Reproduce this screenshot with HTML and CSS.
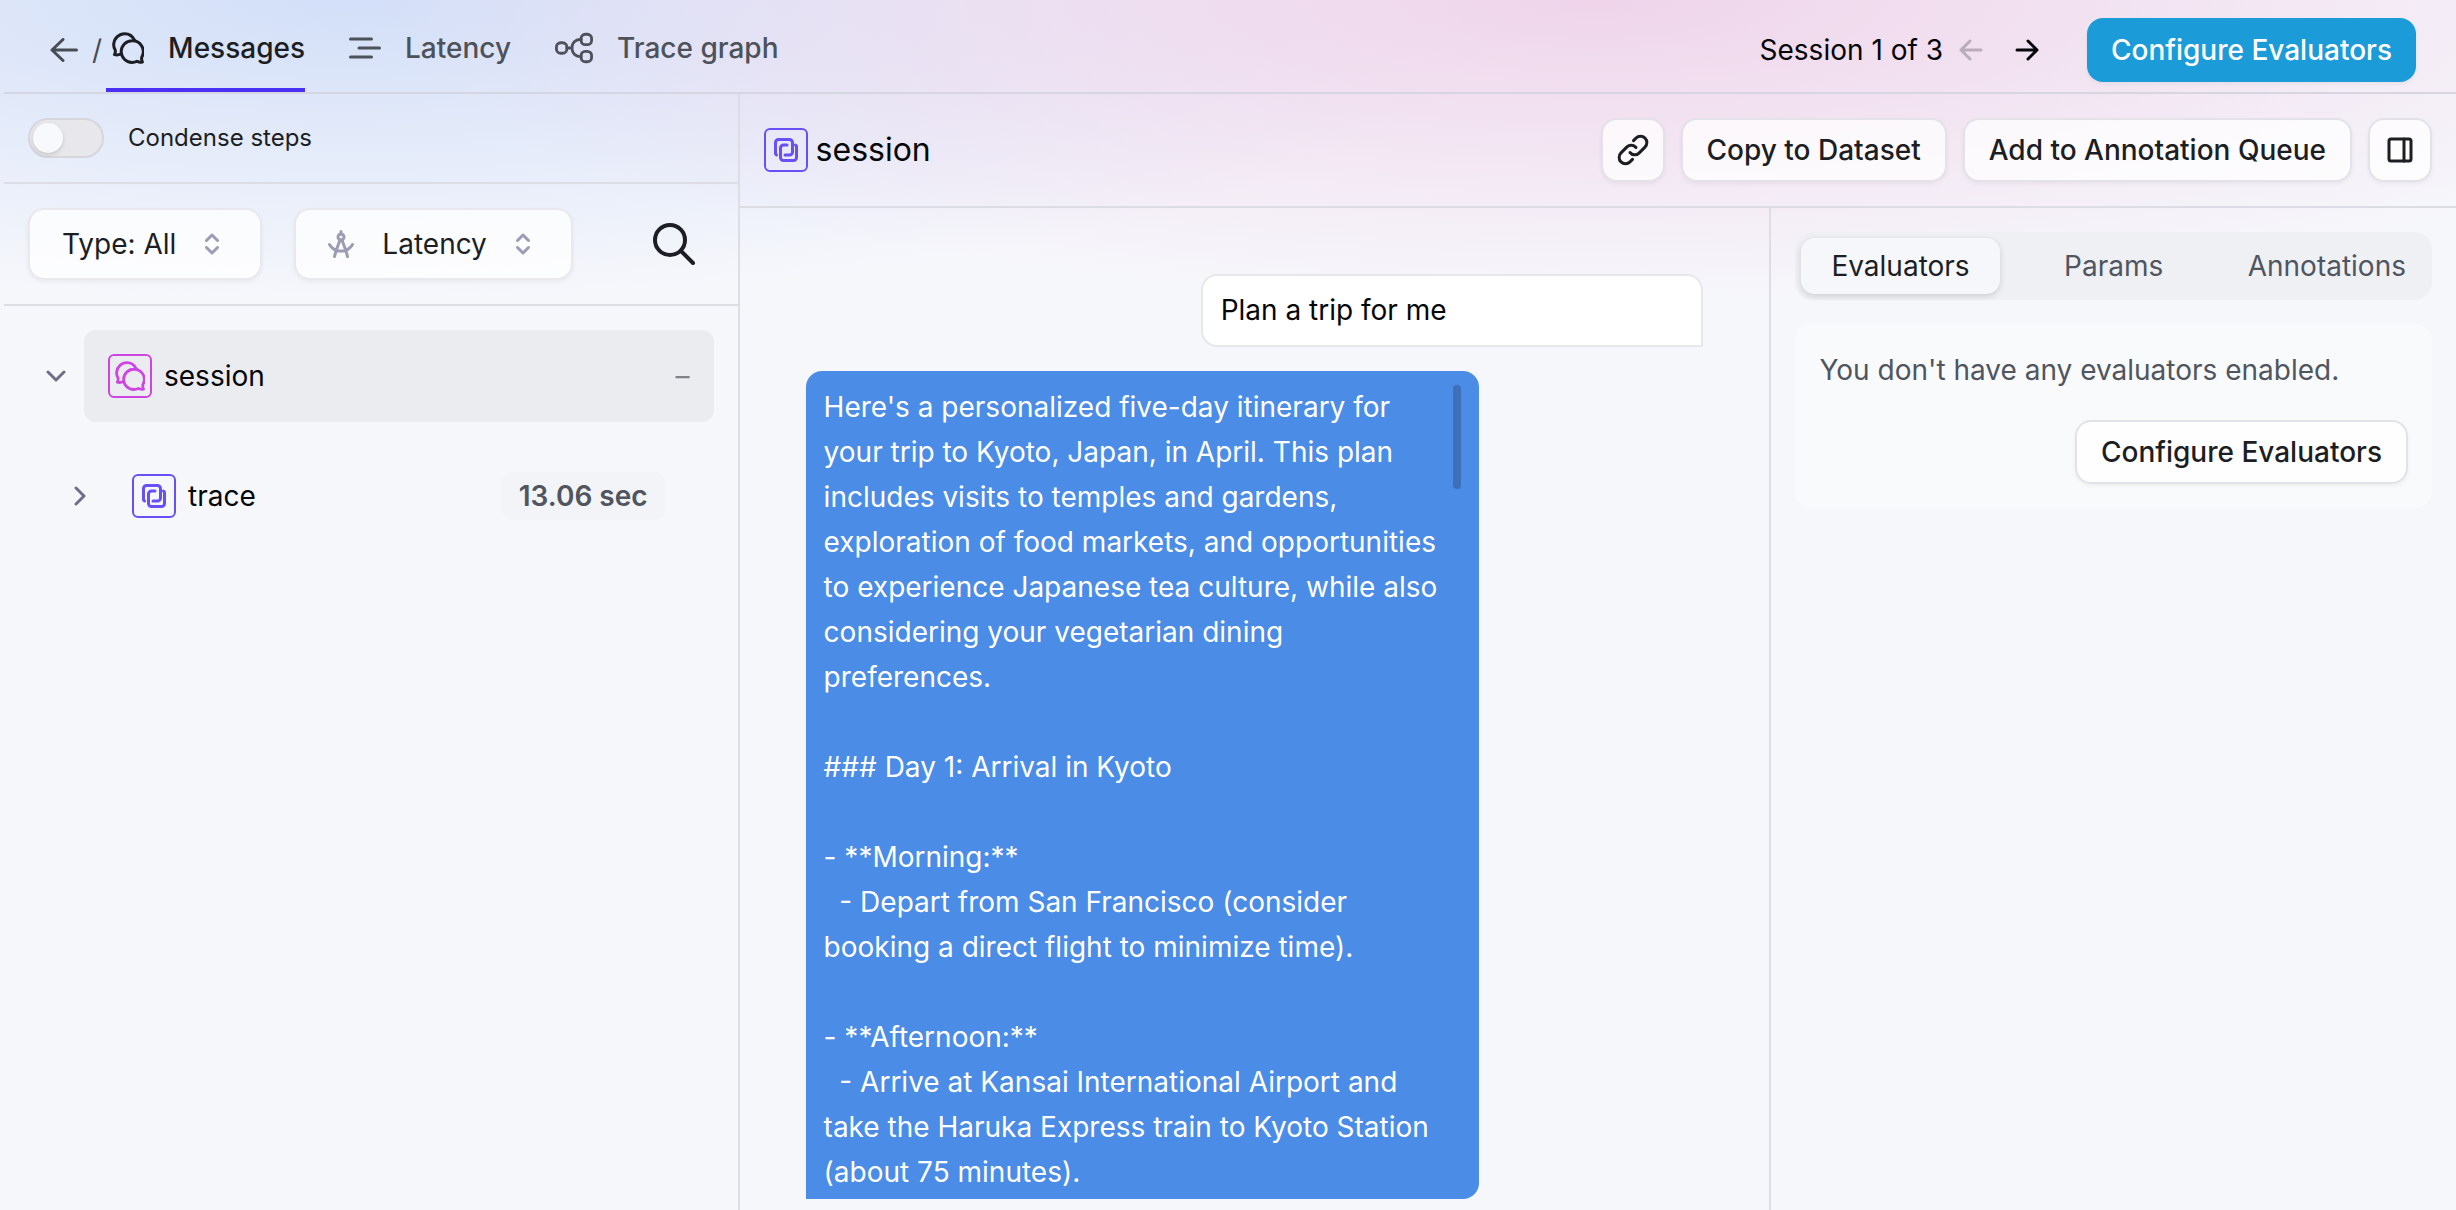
FILE: index.html
```html
<!DOCTYPE html>
<html lang="en">
<head>
    <meta charset="UTF-8">
    <title>Session</title>
    <link rel="stylesheet" href="styles.css">
</head>

<body>
    <!-- shared icons -->
    <svg class="sprite" aria-hidden="true">
        <symbol id="icon-messages" viewBox="0 0 32 32">
            <path d="M8.6 22.2c-1.700 .7-4 .9-6.200 .4 .9-1.400 1.200-3 .8-4.600A10.300 10.300 0 0 1 1.700 12C2.300 6.200 7 1.700 12.700 1.700c4.300 0 8 2.500 9.800 6.500"/>
            <path d="M20 8.800c-6 0-10.800 4.900-10.800 10.800S14 30.400 20 30.400c1.800 0 3.500-.4 5-1.200 1.600 .9 3.400 1.200 5.400 .8-.8-1.600-1-3.300-.6-5a10.800 10.800 0 0 0-9.800-16.200z"/>
        </symbol>
        <symbol id="icon-trace" viewBox="0 0 24 24">
            <path d="M2.500 17A2 2 0 0 1 1.500 15V4.500a3 3 0 0 1 3-3h11a3 3 0 0 1 3 3V14a3 3 0 0 1-3 3H11"/>
            <path d="M21.500 7a2 2 0 0 1 1 2v10.500a3 3 0 0 1-3 3h-10a3 3 0 0 1-3-3V10a3 3 0 0 1 3-3H13"/>
        </symbol>
        <symbol id="icon-updown" viewBox="0 0 16 22">
            <path d="M2.500 7.500L8 2l5.500 5.500M2.500 14.500L8 20l5.500-5.500"/>
        </symbol>
    </svg>

    <div class="app">
        <header class="topbar">
            <a href="#" class="back" aria-label="Back">
                <svg width="28" height="24" viewBox="0 0 28 24"><path d="M13 1.500L2 12l11 10.500M2 12h24.500"/></svg>
            </a>
            <span class="slash">/</span>
            <nav class="tabs">
                <a href="#" class="tab active">
                    <svg width="32" height="32"><use href="#icon-messages"/></svg>
                    Messages
                </a>
                <a href="#" class="tab">
                    <svg width="32" height="32" viewBox="0 0 32 32"><path d="M1.500 7h21M10 16h20.500M1.500 25h21"/></svg>
                    Latency
                </a>
                <a href="#" class="tab">
                    <svg width="38" height="32" viewBox="0 0 40 32">
                        <rect x="1.500" y="10.500" width="11" height="11" rx="4.500"/>
                        <rect x="27.500" y="1.500" width="11" height="11" rx="4.500"/>
                        <rect x="27.500" y="19.500" width="11" height="11" rx="4.500"/>
                        <path d="M12.500 16H18M27.500 7H26a8 8 0 0 0-8 8v2a8 8 0 0 0 8 8h1.500"/>
                    </svg>
                    Trace graph
                </a>
            </nav>
            <div class="pager">
                <span>Session 1 of 3</span>
                <button type="button" class="step" disabled aria-label="Previous session">
                    <svg width="24" height="24" viewBox="0 0 24 24"><path d="M11 3l-9 9 9 9M2 12h20"/></svg>
                </button>
                <button type="button" class="step" aria-label="Next session">
                    <svg width="24" height="24" viewBox="0 0 24 24"><path d="M13 3l9 9-9 9M22 12H2"/></svg>
                </button>
            </div>
            <button type="button" class="btn primary">Configure Evaluators</button>
        </header>

        <div class="body">
            <aside class="sidebar">
                <div class="condense">
                    <input type="checkbox" id="condense" class="switch">
                    <label for="condense">Condense steps</label>
                </div>
                <div class="filters">
                    <button type="button" class="filter">
                        Type: All
                        <svg width="16" height="22"><use href="#icon-updown"/></svg>
                    </button>
                    <button type="button" class="filter">
                        <svg width="26" height="28" viewBox="0 0 26 28">
                            <path d="M13 1.500V4M6.500 26.500L8 21l4-11M19.500 26.500L18 21l-4-11M1.500 14.500c2.500 4.500 6.500 6.500 11.500 6.500s9-2 11.500-6.500"/>
                            <circle cx="13" cy="7" r="3"/>
                        </svg>
                        Latency
                        <svg width="16" height="22"><use href="#icon-updown"/></svg>
                    </button>
                    <button type="button" class="search" aria-label="Search">
                        <svg width="44" height="44" viewBox="0 0 44 44"><circle cx="18" cy="18" r="15"/><path d="M29 29l12 12"/></svg>
                    </button>
                </div>
                <ul class="tree">
                    <li class="node">
                        <button type="button" class="toggle" aria-label="Collapse session">
                            <svg width="20" height="20" viewBox="0 0 20 20"><path d="M2 6l8 8 8-8"/></svg>
                        </button>
                        <div class="node-row selected">
                            <span class="badge pink"><svg width="30" height="30"><use href="#icon-messages"/></svg></span>
                            <span>session</span>
                            <span class="none">–</span>
                        </div>
                    </li>
                    <li class="node child">
                        <button type="button" class="toggle" aria-label="Expand trace">
                            <svg width="20" height="20" viewBox="0 0 20 20"><path d="M6 2l8 8-8 8"/></svg>
                        </button>
                        <div class="node-row">
                            <span class="badge"><svg width="24" height="24"><use href="#icon-trace"/></svg></span>
                            <span>trace</span>
                            <span class="duration">13.06 sec</span>
                        </div>
                    </li>
                </ul>
            </aside>

            <main class="main">
                <div class="main-head">
                    <span class="badge"><svg width="24" height="24"><use href="#icon-trace"/></svg></span>
                    <h1>session</h1>
                    <div class="actions">
                        <button type="button" class="btn icon" aria-label="Copy link">
                            <svg width="32" height="32" viewBox="0 0 32 32">
                                <path d="M13 18.500a6 6 0 0 0 9 .6l6-6a6.300 6.300 0 0 0-9-9l-2.500 2.500"/>
                                <path d="M19 13.500a6 6 0 0 0-9-.6l-6 6a6.300 6.300 0 0 0 9 9l2.500-2.500"/>
                            </svg>
                        </button>
                        <button type="button" class="btn">Copy to Dataset</button>
                        <button type="button" class="btn">Add to Annotation Queue</button>
                        <button type="button" class="btn icon" aria-label="Toggle panel">
                            <svg width="26" height="26" viewBox="0 0 26 26"><rect x="2" y="2" width="22" height="22" rx="2"/><path d="M17 2v22"/></svg>
                        </button>
                    </div>
                </div>

                <div class="content">
                    <section class="chat">
                        <div class="message user">Plan a trip for me</div>
                        <div class="message agent">
                            <div class="thumb"></div>
                            <div class="text">Here's a personalized five-day itinerary for your trip to Kyoto, Japan, in April. This plan includes visits to temples and gardens, exploration of food markets, and opportunities to experience Japanese tea culture, while also considering your vegetarian dining preferences.

### Day 1: Arrival in Kyoto

- **Morning:**
  - Depart from San Francisco (consider booking a direct flight to minimize time).

- **Afternoon:**
  - Arrive at Kansai International Airport and take the Haruka Express train to Kyoto Station (about 75 minutes).</div>
                        </div>
                    </section>

                    <aside class="panel">
                        <div class="segmented">
                            <button type="button" class="segment active">Evaluators</button>
                            <button type="button" class="segment">Params</button>
                            <button type="button" class="segment">Annotations</button>
                        </div>
                        <div class="card">
                            <p>You don't have any evaluators enabled.</p>
                            <button type="button" class="btn">Configure Evaluators</button>
                        </div>
                    </aside>
                </div>
            </main>
        </div>
    </div>
</body>
</html>
```

FILE: styles.css
```css
* {
    box-sizing: border-box;
}

body {
    margin: 0;
    font-family: Inter, "Liberation Sans", sans-serif;
    font-size: 28px;
    line-height: 36px;
    color: #060709;
    background-color: #f6f7fb;
    background-image:
        radial-gradient(ellipse 50% 300px at 65% 0, #efd4ea 0%, rgba(239, 212, 234, 0) 100%),
        radial-gradient(ellipse 48% 300px at 14% 0, #d2dff8 0%, rgba(210, 223, 248, 0) 100%);
    background-repeat: no-repeat;
}

button {
    font: inherit;
    color: inherit;
    background: none;
    border: none;
    padding: 0;
    cursor: pointer;
}

a {
    color: inherit;
    text-decoration: none;
}

svg {
    display: block;
    flex: none;
    fill: none;
    stroke: currentColor;
    stroke-width: 3;
    stroke-linecap: round;
    stroke-linejoin: round;
}

.sprite {
    position: absolute;
    width: 0;
    height: 0;
}

.app {
    display: flex;
    flex-direction: column;
    height: 100vh;
    padding-left: 4px;
    overflow: hidden;
}

/* top bar */
.topbar {
    display: flex;
    align-items: center;
    flex: none;
    height: 94px;
    padding: 8px 40px 0 46px;
    border-bottom: 2px solid #d5d6e2;
}

.back,
.slash {
    color: #484c54;
}

.slash {
    margin: 0 4px 0 14px;
}

.tabs {
    display: flex;
    gap: 44px;
    align-self: stretch;
}

.tab {
    display: flex;
    align-items: center;
    gap: 24px;
    border-bottom: 4px solid transparent;
    font-weight: 500;
    color: #4d515a;
}

.tab.active {
    padding-left: 6px;
    color: #1c1e23;
    border-color: #4a30f5;
}

.pager {
    display: flex;
    align-items: center;
    margin-left: auto;
    margin-right: 48px;
}

.pager .step:first-of-type {
    margin: 0 32px 0 16px;
}

.step:disabled {
    color: #b9adbc;
}

.btn {
    height: 64px;
    padding: 0 24px;
    font-weight: 500;
    color: #1c1e23;
    background-color: rgba(255, 255, 255, 0.75);
    border: 2px solid #e2e2e8;
    border-radius: 16px;
    box-shadow: 0 2px 4px rgba(0, 0, 0, 0.05);
    white-space: nowrap;
}

.btn.primary {
    color: #fff;
    background-color: #1c9bd9;
    border: none;
}

.btn.icon {
    display: flex;
    align-items: center;
    justify-content: center;
    width: 64px;
    padding: 0;
}

/* left column */
.body {
    display: flex;
    flex: 1;
    min-height: 0;
}

.sidebar {
    flex: none;
    width: 30%;
    border-right: 2px solid #dcdde5;
}

.condense {
    display: flex;
    align-items: center;
    gap: 24px;
    height: 90px;
    padding: 0 24px;
    font-size: 24px;
    color: #1c1e23;
    border-bottom: 2px solid #dcdde5;
}

.switch {
    appearance: none;
    width: 76px;
    height: 40px;
    margin: 0;
    padding: 3px;
    background-color: #e8e8ec;
    border: 2px solid #d6d6dc;
    border-radius: 20px;
}

.switch::before {
    content: "";
    display: block;
    width: 30px;
    height: 30px;
    border-radius: 50%;
    background-color: #f8f9fc;
    box-shadow: 0 2px 4px rgba(0, 0, 0, 0.15);
}

.filters {
    display: flex;
    align-items: center;
    gap: 32px;
    height: 122px;
    padding: 0 42px 0 24px;
    border-bottom: 2px solid #dcdde5;
}

.filter {
    display: flex;
    align-items: center;
    gap: 28px;
    height: 72px;
    padding: 0 40px 0 32px;
    color: #1c1e23;
    background-color: rgba(255, 255, 255, 0.75);
    border: 2px solid #e8e8ee;
    border-radius: 16px;
    box-shadow: 0 2px 4px rgba(0, 0, 0, 0.05);
}

.filter svg {
    color: #9c9cb4;
}

.search {
    margin-left: auto;
    color: #1c1e23;
}

.search svg {
    stroke-width: 4;
}

.tree {
    display: flex;
    flex-direction: column;
    gap: 28px;
    margin: 0;
    padding: 24px 24px 0 42px;
    list-style: none;
}

.node {
    display: flex;
    align-items: center;
    gap: 18px;
}

.node.child {
    padding-left: 24px;
}

.toggle {
    color: #6f6d88;
}

.node-row {
    display: flex;
    align-items: center;
    gap: 12px;
    flex: 1;
    height: 92px;
    padding: 0 24px;
}

.node.child .node-row {
    padding-right: 48px;
}

.node-row.selected {
    background-color: #ebecf0;
    border-radius: 12px;
}

.badge {
    display: flex;
    align-items: center;
    justify-content: center;
    flex: none;
    width: 44px;
    height: 44px;
    color: #6950f6;
    border: 2px solid currentColor;
    border-radius: 6px;
}

.badge.pink {
    color: #cd46e4;
}

.none {
    margin-left: auto;
    color: #808289;
}

.duration {
    margin-left: auto;
    padding: 6px 18px;
    font-weight: 600;
    color: #50555f;
    background-color: #f3f4f8;
    border-radius: 12px;
}

/* right side */
.main {
    display: flex;
    flex-direction: column;
    flex: 1;
    min-width: 0;
}

.main-head {
    display: flex;
    align-items: center;
    gap: 8px;
    flex: none;
    height: 114px;
    padding: 0 24px;
    border-bottom: 2px solid #dcdce5;
}

.main-head h1 {
    margin: 0;
    font-size: 32px;
    font-weight: 400;
}

.actions {
    display: flex;
    gap: 16px;
    margin-left: auto;
}

.content {
    display: flex;
    flex: 1;
    min-height: 0;
}

.chat {
    display: flex;
    flex-direction: column;
    align-items: flex-start;
    gap: 24px;
    flex: 1;
    padding: 66px 66px 10px;
}

.message {
    padding: 12px 18px;
    line-height: 45px;
    border-radius: 16px;
}

.message.user {
    align-self: flex-end;
    width: 56%;
    background-color: #fff;
    border: 2px solid #e6e7ea;
    border-bottom-right-radius: 0;
}

.message.agent {
    position: relative;
    width: 75%;
    padding: 14px 40px 4px 18px;
    color: #fff;
    background-color: #4b8ce6;
    border-bottom-left-radius: 0;
}

.text {
    white-space: pre-wrap;
}

.thumb {
    position: absolute;
    top: 14px;
    right: 18px;
    width: 8px;
    height: 104px;
    background-color: #3d70b8;
    border-radius: 4px;
}

.panel {
    width: 40%;
    max-width: 688px;
    padding: 24px;
    border-left: 2px solid #dcdde5;
}

.segmented {
    display: flex;
    justify-content: space-between;
    padding: 6px;
    background-color: #eff0f4;
    border-radius: 18px;
}

.segment {
    height: 56px;
    padding: 0 20px;
    color: #50555f;
    border-radius: 14px;
}

.segment.active {
    padding: 0 30px;
    color: #1c1e23;
    background-color: #f6f7fb;
    box-shadow: 0 2px 6px rgba(0, 0, 0, 0.15);
}

.card {
    display: flex;
    flex-direction: column;
    align-items: flex-end;
    gap: 32px;
    margin-top: 24px;
    padding: 28px 24px 24px;
    background-color: #f9fafc;
    border-radius: 16px;
}

.card p {
    align-self: stretch;
    margin: 0;
    color: #50555f;
}
```
